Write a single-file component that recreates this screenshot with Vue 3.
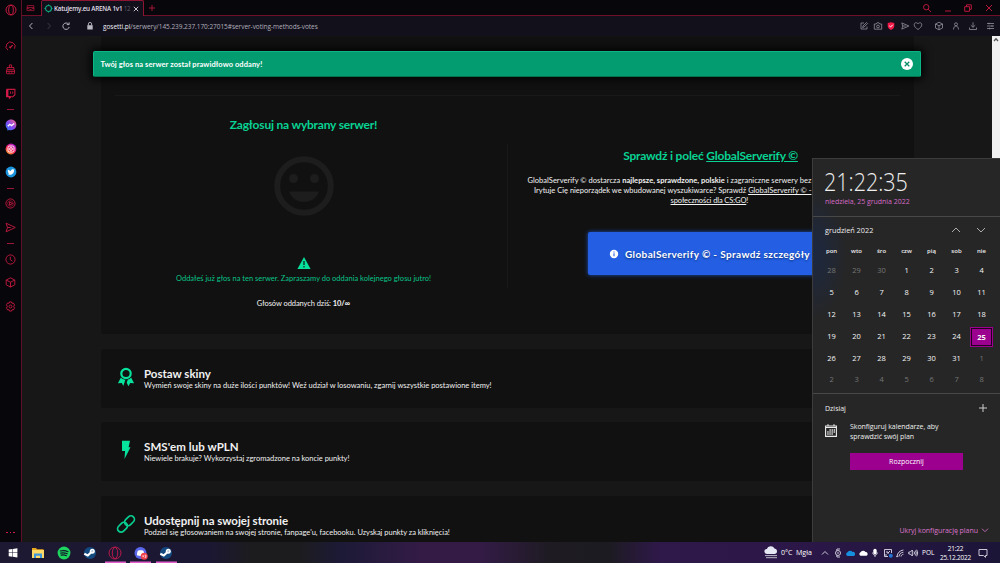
<script setup>
const sideGroups = [
  ['speed', 'cleaner', 'twitch'],
  ['messenger', 'instagram', 'twitter'],
  ['player', 'send'],
  ['clock', 'cube', 'gear'],
]
const weekdays = ['pon', 'wto', 'śro', 'czw', 'pią', 'sob', 'nie']
const days = Array.from({ length: 42 }, (_, i) => {
  if (i < 3) return { n: 28 + i, dim: true }
  if (i < 34) return { n: i - 2, dim: false, today: i - 2 === 25 }
  return { n: i - 33, dim: true }
})
const methods = [
  { icon: 'award', cls: 'm1', title: 'Postaw skiny', text: 'Wymień swoje skiny na duże ilości punktów! Weź udział w losowaniu, zgarnij wszystkie postawione itemy!' },
  { icon: 'bolt', cls: 'm2', title: "SMS'em lub wPLN", text: 'Niewiele brakuje? Wykorzystaj zgromadzone na koncie punkty!' },
  { icon: 'link', cls: 'm3', title: 'Udostępnij na swojej stronie', text: "Podziel się głosowaniem na swojej stronie, fanpage'u, facebooku. Uzyskaj punkty za kliknięcia!" },
]
</script>

<template>
  <div class="screen">
    <div class="browser">
      <aside class="sidebar">
        <svg class="opera" viewBox="0 0 12 12"><circle cx="6" cy="6" r="5" /><ellipse cx="6" cy="6" rx="2.3" ry="4.6" /></svg>
        <div class="groups">
          <template v-for="(g, gi) in sideGroups" :key="gi">
            <div v-if="gi" class="dash"><i></i></div>
            <div v-for="n in g" :key="n" class="side-item">
              <svg v-if="n === 'speed'" viewBox="0 0 12 12"><path d="M3.2 10A4.900 4.900 0 1 1 10.400 8.400" /><path d="M6 6.800L8.300 4.500M4.600 6.200l1.800 1.600" stroke-width="1.300" /></svg>
              <svg v-else-if="n === 'cleaner'" viewBox="0 0 12 12"><path d="M4.800 3.600V1h2.400v2.600M2.300 3.800h7.400v2.400H2.300zM1.600 6.200v3.600q0 .8.800.8h7.200q.8 0 .8-.8V6.200M1.600 8h8.800M4.500 8v1.500M7.500 8v1.500" /></svg>
              <svg v-else-if="n === 'twitch'" viewBox="0 0 12 12"><path d="M2 1.500h8.800v5.800L8.600 9.500H6.500l-1.700 1.700V9.500H2z" stroke-width="1.200" /><path class="fill" d="M1.200 2h2.500v6.700h2.500v2.500L3.800 9.800H1.200z" /><path d="M6.100 3.800v2.400M8.400 3.800v2.400" /></svg>
              <svg v-else-if="n === 'messenger'" class="brand" viewBox="0 0 12 12">
                <defs><linearGradient id="msg" x1="0" y1="1" x2="1" y2="0"><stop offset="0" stop-color="#287cff" /><stop offset=".5" stop-color="#8a45ee" /><stop offset="1" stop-color="#ff6878" /></linearGradient></defs>
                <path fill="url(#msg)" d="M6 .5C2.8.5.6 2.8.6 5.8c0 1.6.6 3 1.7 4v1.800L4.100 11c3.700 1 7.300-1.300 7.300-5.200C11.400 2.800 9.200.5 6 .5z" /><path d="M2.800 7.300l2-2 1.700 1.300 2.700-2" stroke="#fff" stroke-width="1.300" fill="none" />
              </svg>
              <svg v-else-if="n === 'instagram'" class="brand" viewBox="0 0 12 12">
                <defs><linearGradient id="ig" x1=".1" y1="1" x2=".8" y2="0"><stop offset="0" stop-color="#ffc233" /><stop offset=".45" stop-color="#fb2457" /><stop offset="1" stop-color="#a51be0" /></linearGradient></defs>
                <circle cx="6" cy="6" r="5.400" fill="url(#ig)" /><rect x="3" y="3" width="6" height="6" rx="1.600" fill="none" stroke="#fff" stroke-width=".9" /><circle cx="6" cy="6" r="1.400" fill="none" stroke="#fff" stroke-width=".9" />
              </svg>
              <svg v-else-if="n === 'twitter'" class="brand" viewBox="0 0 12 12"><circle cx="6" cy="6" r="5.400" fill="#1893dc" /><path fill="#fff" d="M3 3.600c1 1 2 1.400 3 1.400 0-1.800 1.700-2.300 2.600-1.400l1-.3-.6 1c.3 3-2.400 5.500-6.200 4.200.8 0 1.300-.2 1.700-.5-1-.2-1.300-.7-1.400-1.200h.6C3 6.300 2.700 5.700 2.700 5.200l.6.1C2.700 4.800 2.700 4.200 3 3.600z" /></svg>
              <svg v-else-if="n === 'player'" viewBox="0 0 12 12"><circle cx="6" cy="6" r="5" /><circle cx="6" cy="6" r="3.100" stroke-width=".6" /><path d="M5 4.200v3.600L8.200 6z" /></svg>
              <svg v-else-if="n === 'send'" viewBox="0 0 12 12"><path d="M1.200 1.300L11.200 6l-10 4.700L2.700 6zM2.700 6h3.500" /></svg>
              <svg v-else-if="n === 'clock'" viewBox="0 0 12 12"><circle cx="6" cy="6" r="5" /><path d="M5.800 3v3.300l2.200 1.500" /></svg>
              <svg v-else-if="n === 'cube'" viewBox="0 0 12 12"><path d="M6 .9l4.700 2.400v5.200L6 11 1.300 8.500V3.300zM1.300 3.300L6 5.700l4.700-2.400M6 5.700V11" /></svg>
              <svg v-else viewBox="0 0 12 12"><path d="M4.900 1h2.200l.5 1.500 1.500-.3 1.300 2L9.500 6l.9 1.800-1.300 2-1.500-.3-.5 1.500H4.900l-.5-1.500-1.500.3-1.300-2L2.500 6l-.9-1.800 1.300-2 1.500.3z" /><circle cx="6" cy="6" r="1.600" /></svg>
            </div>
          </template>
        </div>
        <div class="more"><i></i><i></i><i></i></div>
      </aside>

      <div class="main">
        <header class="tabs">
          <svg class="pocket" viewBox="0 0 10 8"><path d="M1.400 3.500V1.300h7.200v2.200M1.100 3.500h7.800v3.400H1.100zM1.100 4.600h2l1 1h1.800l1-1h2" /></svg>
          <div class="tab">
            <svg class="fav" viewBox="0 0 10 10"><circle cx="5" cy="5" r="3.300" fill="none" stroke="#11a87e" stroke-width="1.300" /><path d="M5 .4v1.500M5 8.100v1.500M.4 5h1.500M8.100 5h1.500" stroke="#11a87e" /></svg>
            <span class="tab-title">Katujemy.eu ARENA 1v1 <em>12</em></span>
            <svg class="tab-x" viewBox="0 0 8 8"><path d="M1.800 1.800l4.400 4.400M6.200 1.800L1.800 6.200" /></svg>
          </div>
          <svg class="plus" viewBox="0 0 8 8"><path d="M4 1v6M1 4h6" /></svg>
          <div class="win">
            <svg viewBox="0 0 10 10"><circle cx="4.200" cy="4.200" r="2.700" /><path d="M6.200 6.200L9 9" /></svg>
            <svg viewBox="0 0 10 10"><path d="M2 8h6" /></svg>
            <svg viewBox="0 0 10 10"><path d="M1.700 3.700h4.800v4.600H1.700zM3.500 3.700V1.800h4.800v4.500H6.500" /></svg>
            <svg viewBox="0 0 10 10"><path d="M2 2l6 6M8 2L2 8" /></svg>
          </div>
        </header>

        <div class="address">
          <svg class="nav" viewBox="0 0 10 10"><path d="M6.400 2L3.500 5l2.900 3" /></svg>
          <svg class="nav off" viewBox="0 0 10 10"><path d="M3.600 2l2.900 3-2.900 3" /></svg>
          <svg class="nav" viewBox="0 0 10 10"><path d="M7.600 3.200A3.200 3.200 0 1 0 8.200 6M8.100 1.400v2.200H5.800" /></svg>
          <svg class="lock" viewBox="0 0 8 10"><path d="M2.400 4.500V3a1.600 1.600 0 0 1 3.200 0v1.500" fill="none" stroke="#aaa8b4" /><rect x="1.300" y="4.200" width="5.400" height="4.300" fill="#b9b8c1" /></svg>
          <span class="url"><b>gosetti.pl</b>/serwery/145.239.237.170:27015#server-voting-methods-votes</span>
          <div class="tools">
            <svg viewBox="0 0 10 10"><path d="M5 2H2v6h6V5.500M3.700 6.500l.3-1.600L7.600 1.500l1 1-3.500 3.500z" /></svg>
            <svg viewBox="0 0 10 10"><path d="M1.300 3h1.900l.8-1.200h2L6.800 3h1.900v5.200H1.300z" /><circle cx="5" cy="5.500" r="1.400" /></svg>
            <svg class="shield" viewBox="0 0 10 10"><path d="M5 1.200l3.300.7v3.200C8.300 7 6.800 8.300 5 9 3.200 8.300 1.700 7 1.700 5.100V1.900z" fill="#ef1846" stroke="none" /><path d="M3.300 4.800l1.300 1.200 2.200-2.300" stroke="#fff" /></svg>
            <svg viewBox="0 0 10 10"><path d="M1.800 1.900L8.900 5 1.800 8.100 2.800 5zM2.800 5h3" /></svg>
            <svg viewBox="0 0 10 10"><path d="M5 8.500C2.700 6.900 1.200 5.500 1.200 3.700c0-2 2.600-2.800 3.800-.8 1.200-2 3.800-1.200 3.800.8C8.800 5.500 7.300 6.900 5 8.500z" /></svg>
            <svg class="gap1" viewBox="0 0 10 10"><path d="M5 1.200l3.500 1.800v4L5 8.800 1.500 7V3zM1.500 3L5 4.800 8.500 3M5 4.800v4" /></svg>
            <svg class="gap2" viewBox="0 0 10 10"><circle cx="5" cy="3.300" r="1.500" /><path d="M2.500 8.500c0-4.600 5-4.600 5 0" /></svg>
            <svg class="gap2" viewBox="0 0 10 10"><path d="M5 1.300v5M2.800 4.200L5 6.300l2.200-2.100M1.500 6.500v2h7v-2" /></svg>
            <svg class="gap3" viewBox="0 0 10 10"><path d="M2 2.500h7M2 5h7M2 7.500h7M4 1.700v1.600M7 4.200v1.600M4.500 6.700v1.600" /></svg>
          </div>
        </div>

        <main class="page">
          <div class="content">
            <section class="card vote">
              <div class="rule"></div>
              <div class="cols">
                <div class="left">
                  <h2 class="h-vote">Zagłosuj na wybrany serwer!</h2>
                  <svg class="smile" viewBox="0 0 60 60"><circle cx="30" cy="30" r="26.800" fill="none" stroke="#1d1d1d" stroke-width="6" /><circle cx="19.500" cy="22.500" r="4.500" /><circle cx="40.500" cy="22.500" r="4.500" /><path d="M15 35.500h30c-2.500 7-8.500 10.500-15 10.500s-12.500-3.500-15-10.500z" /></svg>
                  <svg class="warn" viewBox="0 0 14 12"><path d="M7 0l6.600 12H.4z" fill="#06e09a" /><path d="M7 4v4M7 9v1.400" stroke="#111" stroke-width="1.200" /></svg>
                  <p class="done">Oddałeś już głos na ten serwer. Zapraszamy do oddania kolejnego głosu jutro!</p>
                  <p class="count">Głosów oddanych dziś: <b>10/∞</b></p>
                </div>
                <div class="divider"></div>
                <div class="right">
                  <h2 class="h-check">Sprawdź i poleć <u>GlobalServerify ©</u></h2>
                  <div class="promo">
                    <p class="p1">GlobalServerify © dostarcza <b>najlepsze, sprawdzone, polskie</b> i zagraniczne serwery bez</p>
                    <p class="p2">Irytuje Cię nieporządek we wbudowanej wyszukiwarce? Sprawdź <u>GlobalServerify © -</u></p>
                    <p class="p3"><u>społeczności dla CS:GO</u>!</p>
                  </div>
                  <div class="cta">
                    <svg viewBox="0 0 10 10"><circle cx="5" cy="5" r="4.200" fill="#fff" /><path d="M5 2.500v1M5 4.300v3" stroke="#235ee3" stroke-width="1.100" /></svg>
                    <span>GlobalServerify © - Sprawdź szczegóły</span>
                  </div>
                </div>
              </div>
            </section>
            <section v-for="m in methods" :key="m.icon" class="card method" :class="m.cls">
              <svg v-if="m.icon === 'award'" viewBox="0 0 20 20"><circle cx="10" cy="6.500" r="4.700" fill="none" stroke="#07e29d" stroke-width="2.200" /><path fill="#07e29d" d="M4.900 10.500c1.100 1.500 2.700 2 4.500 2.200L7.300 19l-1.500-2.900-3.900.2zM15.100 10.500c-1 1.300-2 1.800-3.300 2.100l-1.100 3.100 1.800 3.600 1.700-3.200 3.900.2z" /></svg>
              <svg v-else-if="m.icon === 'bolt'" viewBox="0 0 20 20"><path fill="#07e29d" d="M6 .8h8l-1.400 6.500h1.900L8.500 19l.6-8H6z" /></svg>
              <svg v-else viewBox="0 0 20 20"><g fill="none" stroke="#08ce90" stroke-width="1.700"><rect x="8" y="3.200" width="11" height="7" rx="3.500" transform="rotate(-45 13.500 6.700)" /><rect x="1" y="9.800" width="11" height="7" rx="3.500" transform="rotate(-45 6.500 13.300)" /></g></svg>
              <div><h3>{{ m.title }}</h3><p>{{ m.text }}</p></div>
            </section>
          </div>
          <div class="scroll"><svg viewBox="0 0 8 8"><path d="M2 5l2-2.200L6 5" /></svg></div>
        </main>
      </div>
    </div>

    <div class="toast">
      <span>Twój głos na serwer został prawidłowo oddany!</span>
      <svg viewBox="0 0 12 12"><circle cx="6" cy="6" r="6" fill="#fff" /><path d="M3.700 3.700l4.600 4.600M8.300 3.700L3.700 8.300" stroke="#078d69" stroke-width="1.300" /></svg>
    </div>

    <div class="flyout">
      <div class="clock">
        <div class="time">21:22:35</div>
        <div class="date">niedziela, 25 grudnia 2022</div>
      </div>
      <div class="cal">
        <div class="month"><span>grudzień 2022</span><svg viewBox="0 0 10 10"><path d="M1 7l4-4 4 4" /></svg><svg viewBox="0 0 10 10"><path d="M1 3l4 4 4-4" /></svg></div>
        <div class="week"><span v-for="w in weekdays" :key="w">{{ w }}</span></div>
        <div class="days"><span v-for="(d, i) in days" :key="i" :class="{ dim: d.dim, today: d.today }">{{ d.n }}</span></div>
      </div>
      <div class="agenda">
        <div class="today-row"><span>Dzisiaj</span><svg viewBox="0 0 10 10"><path d="M5 1v8M1 5h8" /></svg></div>
        <div class="plan">
          <svg viewBox="0 0 12 13"><path d="M.6 2h10.800v10.400H.6zM.6 3.500h10.800M3 .3V2M9 .3V2" fill="none" stroke="#eee" stroke-width="1.100" /><path d="M4.500 6h5.500M2.300 8h7.700M2.300 10h5.500" stroke="#eee" stroke-width="1.300" stroke-dasharray="1.300 .8" /></svg>
          <div>Skonfiguruj kalendarze, aby<br>sprawdzić swój plan</div>
        </div>
        <button>Rozpocznij</button>
        <div class="hide"><span>Ukryj konfigurację planu</span><svg viewBox="0 0 10 10"><path d="M2 3.700l3 3 3-3" /></svg></div>
      </div>
    </div>

    <footer class="taskbar">
      <div class="apps">
        <div><svg viewBox="0 0 14 14"><path fill="#fff" d="M2.700 3.500l3.700-.5v3.600H2.700zM6.900 2.900l4.500-.6v4.300H6.900zM2.700 7.100h3.700v3.700l-3.700-.5zM6.900 7.100h4.500v4.300l-4.500-.6z" /></svg></div>
        <div><svg viewBox="0 0 14 14"><path fill="#e9a91f" d="M1 2h4l1 1.200h6.500V5H1z" /><path fill="#ffd968" d="M1 4h12v8H1z" /><path fill="#3f97dc" d="M3 7.500h8V12H9V9.700H5V12H3z" /></svg></div>
        <div><svg viewBox="0 0 14 14"><circle cx="7" cy="7" r="6.400" fill="#1ed65f" /><path d="M3.300 5c3-.8 5.400-.5 7.700.7M3.700 7.200c2.400-.7 4.500-.4 6.500.6M4.100 9.200c2-.5 3.800-.3 5.300.5" fill="none" stroke="#14162a" stroke-width="1.200" stroke-linecap="round" /></svg></div>
        <div><svg viewBox="0 0 14 14"><circle cx="7" cy="7" r="6" fill="#12497f" /><path d="M1.300 7.800l3.500 1.700L9 5.500" stroke="#fff" stroke-width="2.200" fill="none" /><circle cx="9.300" cy="5.200" r="2.500" fill="#fff" /><circle cx="9.300" cy="5.200" r="1.100" fill="#b9c9da" /></svg></div>
        <div class="on"><svg viewBox="0 0 14 14"><circle cx="7" cy="7" r="6" fill="none" stroke="#b6194a" /><ellipse cx="7" cy="7" rx="2.700" ry="5.600" fill="none" stroke="#b6194a" /></svg></div>
        <div class="on"><svg viewBox="0 0 14 14"><circle cx="6.500" cy="7" r="6" fill="#5967ec" /><path d="M3 9.300c0-3 .5-4.300 1.300-4.700 1.600-.6 3-.6 4.600 0 .8.500 1.300 1.700 1.300 4.700-2.300 1-5 1-7.200 0z" fill="#fff" /><circle cx="10.200" cy="10.200" r="3.500" fill="#ee414b" /><path d="M8.300 10.200h1.800M9.200 9.300v1.800M10.600 9.100h1.400v1.100h-1M12 10.200v1.200h-1.400" stroke="#fff" stroke-width=".6" fill="none" /></svg></div>
        <div class="on"><svg viewBox="0 0 14 14"><circle cx="7" cy="7" r="6" fill="#12497f" /><path d="M1.300 7.800l3.500 1.700L9 5.500" stroke="#fff" stroke-width="2.200" fill="none" /><circle cx="9.300" cy="5.200" r="2.500" fill="#fff" /><circle cx="9.300" cy="5.200" r="1.100" fill="#b9c9da" /></svg></div>
      </div>
      <div class="tray">
        <svg class="fog" viewBox="0 0 14 13"><path fill="#e5e7f2" d="M3 8a2.500 2.500 0 0 1-.2-5 4.200 4.200 0 0 1 7.700-.5A2.800 2.800 0 0 1 11 8z" /><path d="M1 9.600h12M2 11.700h11" stroke="#c9cbd8" /></svg>
        <span class="weather">0°C&nbsp; Mgła</span>
        <svg class="t1" viewBox="0 0 10 10"><path d="M2 6.500l3-3 3 3" /></svg>
        <svg class="t2" viewBox="0 0 10 10"><circle cx="5" cy="5" r="2.500" /><path d="M3.500 2.500L4 1h3M3.500 7.500L4 9h3M4 5h2" /></svg>
        <svg class="t3" viewBox="0 0 10 10"><path fill="#168fdf" stroke="none" d="M2.500 8a2 2 0 0 1 0-3.800 3 3 0 0 1 5-.3A2.100 2.100 0 0 1 8.500 8z" /></svg>
        <svg class="t3" viewBox="0 0 10 10"><path fill="#fff" stroke="none" d="M2.500 7.800a2 2 0 0 1 0-3.600 3 3 0 0 1 5-.2 2 2 0 0 1 1 3.800z" /></svg>
        <svg class="t3" viewBox="0 0 10 10"><rect x="3.300" y=".8" width="3.400" height="5.700" rx="1.700" fill="#fff" stroke="none" /><path d="M2.700 4.500c0 3.600 4.600 3.600 4.600 0M5 7.300V9" /></svg>
        <svg class="t3" viewBox="0 0 10 10"><path d="M8.500 5V1.500h-7v7H5M3 4h2v2M7 3L5 5M3 6v2" /><circle cx="7.800" cy="7.800" r="2" fill="#2474d5" stroke="none" /></svg>
        <svg class="t3" viewBox="0 0 10 10"><path d="M2 8.500C2.300 5 4.800 2.500 8.400 2M4 8.500c.2-2.300 1.900-4 4.400-4.300M6 8.500c.1-1.200 1-2 2.400-2.200M1.200 8.600h2" /></svg>
        <svg class="t3" viewBox="0 0 10 10"><path d="M.8 4h1.500L4.300 2v6l-2-2H.8zM6 3.500q1 1.500 0 3M7.400 2.500q1.800 2.500 0 5M8.700 1.700q2 3.300 0 6.600" /></svg>
        <span class="lang">POL</span>
        <span class="when">21:22<br>25.12.2022</span>
        <svg class="note" viewBox="0 0 10 10"><path d="M1 1.500h8v6H7.500v1.800L5.500 7.500H1z" /></svg>
      </div>
    </footer>
  </div>
</template>

<style>
html, body { margin: 0; background: #07060b; overflow: hidden; }
</style>

<style scoped>
* { box-sizing: border-box; }
.screen { position: relative; width: 1000px; height: 563px; overflow: hidden; display: flex; flex-direction: column; font-family: "Open Sans", "Noto Sans", sans-serif; color: #fff; white-space: nowrap; }
svg { display: block; flex: none; overflow: visible; }
p, h2, h3 { margin: 0; }
.browser { height: 542px; display: flex; }
.sidebar { width: 21px; background: #07060b; display: flex; flex-direction: column; align-items: center; flex: none; }
.sidebar svg { fill: none; stroke: #c4193f; stroke-width: 1; }
.sidebar .fill { fill: #d3194a; stroke: none; }
.sidebar .brand { stroke: none; width: 12px; height: 12px; }
.opera { width: 12px; height: 12px; margin-top: 4px; }
.groups { margin-top: 18.500px; display: flex; flex-direction: column; align-items: center; }
.side-item { height: 23.600px; display: flex; align-items: center; }
.side-item svg { width: 11px; height: 11px; }
.dash { height: 8px; display: flex; align-items: center; }
.dash i { width: 7px; height: 1px; background: #9b1739; }
.more { margin-top: auto; margin-bottom: 9px; display: flex; gap: 2px; }
.more i { width: 1.500px; height: 1.500px; background: #d51a47; }
.main { flex: 1; min-width: 0; border-left: 1px solid #5e0e27; }
.tabs { height: 16px; display: flex; align-items: center; background: #07060b; border-bottom: 1px solid #6e1029; }
.pocket { width: 9px; height: 8px; margin-left: 4px; fill: none; stroke: #a31636; stroke-width: .9; }
.tab { width: 103px; height: 16px; margin-left: 6px; border: 1px solid #8d1534; border-bottom: 0; background: #12101b; display: flex; align-items: center; border-radius: 2px 2px 0 0; align-self: flex-start; }
.fav { width: 9px; height: 9px; margin-left: 2px; margin-right: 1px; }
.tab-title { width: 77px; font-size: 6.300px; letter-spacing: -.22px; font-weight: 600; color: #e0dfe8; }
.tab-title em { font-style: normal; color: #5f5c69; font-weight: 400; }
.tab-x { width: 8px; height: 8px; margin-left: 1px; stroke: #c7c4cf; }
.plus { width: 8px; height: 8px; margin-left: 4px; stroke: #a31636; }
.win { margin-left: auto; display: flex; gap: 10.700px; padding-right: 6px; }
.win svg { width: 10px; height: 10px; stroke: #b9173b; fill: none; }
.address { height: 20px; display: flex; align-items: center; background: #12101b; }
.nav { width: 10px; height: 10px; fill: none; stroke: #b3b0bd; margin-left: 4px; margin-right: 3.500px; }
.nav.off { stroke: #3e3b48; }
.lock { width: 8px; height: 10px; margin-left: 11px; }
.url { margin-left: 9.500px; font-size: 6.500px; letter-spacing: -.045px; color: #b1afba; }
.url b { font-weight: 400; color: #f0eff5; }
.tools { margin-left: auto; padding-right: 5px; display: flex; gap: 3.500px; }
.tools svg { width: 10px; height: 10px; fill: none; stroke: #93909d; stroke-width: .8; }
.tools .shield { stroke-width: 1; }
.tools .gap1 { margin-left: 7px; }
.tools .gap2 { margin-left: 3.500px; }
.tools .gap3 { margin-left: 4px; }
.page { height: 506px; overflow: hidden; background: #171717; display: flex; font-family: Lato, sans-serif; }
.content { width: 813px; margin-left: 78.500px; }
.scroll { width: 8px; margin-left: auto; background: #f1f1f1; }
.scroll svg { width: 8px; height: 8px; fill: none; stroke: #555; stroke-width: 1.300; }
.card { background: #111; border-radius: 3px; }
.vote { height: 298px; padding-top: 59px; }
.rule { height: 1px; margin: 0 14px; background: #191919; }
.cols { display: flex; }
.left { width: 406px; display: flex; flex-direction: column; align-items: center; }
.h-vote, .h-check { font-size: 12px; line-height: 16px; font-weight: 700; color: #08d393; letter-spacing: -.2px; }
.h-vote { margin-top: 21px; }
.smile { width: 60px; height: 60px; margin-top: 23px; fill: #1d1d1d; }
.warn { width: 14px; height: 12px; margin-top: 41px; }
.done { margin-top: 5px; line-height: 10px; font-size: 7.500px; color: #09c388; }
.count { margin-top: 14.500px; line-height: 10px; font-size: 7.500px; color: #f2f2f2; letter-spacing: -.07px; }
.divider { width: 1px; height: 144px; margin-top: 48px; background: #191919; }
.right { flex: 1; display: flex; flex-direction: column; align-items: center; }
.h-check { margin-top: 52px; }
.promo { width: 366px; margin-top: 12px; font-size: 7.500px; line-height: 10px; color: #f2f2f2; }
.p1 { letter-spacing: .03px; }
.p2 { padding-left: 6.500px; }
.p3 { padding-left: 143px; letter-spacing: -.1px; }
.cta { align-self: flex-start; width: 246px; height: 43px; margin: 26px 0 0 80.500px; background: #235ee3; border-radius: 2px; box-shadow: 0 0 4px #1e4fb9; display: flex; align-items: center; padding-left: 21px; }
.cta svg { width: 10px; height: 10px; }
.cta span { margin-left: 6px; font-size: 10px; font-weight: 700; letter-spacing: .37px; text-shadow: 0 1px 2px #103579; }
.method { height: 59px; margin-top: 14.500px; padding: 17px 0 0 15.500px; display: flex; }
.method svg { width: 20px; height: 20px; margin-top: 1px; }
.method div { margin-left: 8px; }
.method h3 { font-size: 11.500px; line-height: 15px; color: #f1f1f1; }
.method p { font-size: 7.500px; line-height: 10px; color: #f0f0f0; }
.m2 h3 { letter-spacing: .07px; }
.m3 h3 { letter-spacing: -.03px; }
.m2 p, .m3 p { letter-spacing: -.02px; }
.toast { position: absolute; left: 93px; top: 51px; width: 828px; height: 26px; background: #039c70; border: 1px solid #0cb586; border-bottom-color: #04734f; border-radius: 2px; box-shadow: 0 0 8px 3px #000c; display: flex; align-items: center; justify-content: space-between; padding: 0 7px 0 6.500px; font: 700 7.500px Lato, sans-serif; letter-spacing: .08px; }
.toast svg { width: 12px; height: 12px; }
.flyout { position: absolute; left: 812px; top: 158px; width: 188px; height: 384px; background: radial-gradient(ellipse 34px 65px at 0 95px, #1c2842, #1c284200), #262626; border: solid #3c3c3c; border-width: 1px 0 0 1px; color: #eee; }
.clock { height: 58px; border-bottom: 1px solid #484848; padding: 8px 0 0 11px; }
.time { width: 100px; font-size: 25px; line-height: 29px; font-weight: 300; transform: scaleX(.86); transform-origin: 0 50%; }
.date { margin-left: 1px; font-size: 7px; line-height: 12px; color: #d66bc6; letter-spacing: -.03px; }
.cal { height: 177px; border-bottom: 1px solid #484848; }
.month { display: flex; align-items: center; height: 26px; padding: 0 14px 0 12px; font-size: 7.300px; }
.month span { flex: 1; }
.month svg { width: 10px; height: 10px; margin-left: 15px; fill: none; stroke: #bbb; stroke-width: .9; }
.week, .days { display: grid; grid-template-columns: repeat(7, 25px); padding-left: 6px; text-align: center; }
.week { height: 17px; line-height: 17px; font-size: 6px; font-weight: 600; }
.days { grid-auto-rows: 21.900px; font-size: 7.500px; line-height: 21.900px; font-weight: 500; letter-spacing: -.15px; color: #f6f6f6; }
.days .dim { color: #777; font-weight: 400; }
.days .today { width: 23px; height: 20px; margin: 1px; background: #9b008e; border: 1px solid #9b008e; outline: 1.500px solid #21001f; outline-offset: -2.500px; line-height: 18px; font-weight: 700; }
.agenda { font-size: 7px; }
.today-row { display: flex; justify-content: space-between; align-items: center; padding: 6px 12px 0 12px; height: 22px; }
.today-row svg { width: 10px; height: 10px; stroke: #ccc; }
.plan { display: flex; padding: 6px 0 0 12px; line-height: 9.500px; }
.plan > div { letter-spacing: -.06px; }
.plan svg { width: 12px; height: 13px; margin-top: 2px; margin-right: 13px; }
button { display: block; width: 113px; height: 17px; margin: 12px 0 0 37px; border: 0; padding: 0; background: #9b008e; color: #fff; font: 7px "Open Sans", sans-serif; }
.hide { display: flex; justify-content: flex-end; align-items: center; gap: 2px; margin-top: 55px; padding-right: 10px; color: #dc75cd; letter-spacing: -.03px; }
.hide svg { width: 10px; height: 10px; fill: none; stroke: #bb68af; }
.taskbar { height: 21px; background: linear-gradient(90deg, #1d1932, #1b1733 21%, #1c1c1f 25%, #1c1c1f 30%, #1c1a36 34%, #331b46 42%, #331b46 48%, #1e1b22 55%, #1d1b22 61%, #2f184a 66%, #2a1747 82%, #1b1538); display: flex; justify-content: space-between; }
.apps { display: flex; }
.apps div { width: 25.600px; height: 21px; display: flex; align-items: center; justify-content: center; }
.apps .on { box-shadow: inset 0 -1.500px #e35dcd; background-clip: content-box; width: 21px; margin: 0 2.300px; }
.apps svg { width: 14px; height: 14px; }
.tray { display: flex; align-items: center; font-size: 7px; }
.tray svg { width: 10px; height: 10px; fill: none; stroke: #dedbe6; stroke-width: .9; }
.tray .fog { width: 14px; height: 13px; stroke: none; }
.weather { width: 35px; margin-left: 3px; }
.tray .t1 { margin-left: 4px; }
.tray .t2 { margin-left: 2.500px; }
.tray .t3 { margin-left: 2.500px; }
.lang { width: 14px; margin-left: 4.500px; font-size: 6.500px; }
.when { width: 33px; margin-left: 3px; font-size: 6.500px; line-height: 9px; text-align: center; letter-spacing: -.2px; }
.tray .note { margin: 0 12px 0 6px; }
</style>
